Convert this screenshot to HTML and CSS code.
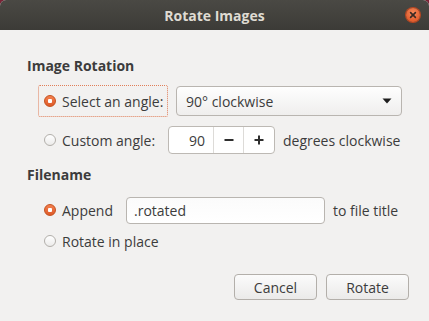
FILE: index.html
```html
<!DOCTYPE html>
<html lang="en">
<head>
  <meta charset="UTF-8" />
  <title>Rotate Images</title>
  <link rel="stylesheet" href="styles.css">
</head>
<body>
  <div class="window">

    <!-- title bar -->
    <header class="titlebar">
      <span class="title">Rotate Images</span>
      <span class="close">
        <svg width="14" height="14" viewBox="0 0 14 14"><path d="M4.6 4.6l4.8 4.8M9.4 4.6l-4.8 4.8" stroke="#3a2a24" stroke-width="1.6" stroke-linecap="round"/></svg>
      </span>
    </header>

    <main class="content">
      <section class="group">
        <h2>Image Rotation</h2>
        <div class="row">
          <label class="radio angle focus"><span class="dot on"></span>Select an angle:</label>
          <div class="combo">
            <span>90° clockwise</span>
            <svg class="arrow" width="10" height="6" viewBox="0 0 10 6"><path d="M0.5 0.5h9l-4.5 5z" fill="#1e1e1e"/></svg>
          </div>
        </div>
        <div class="row">
          <label class="radio angle"><span class="dot"></span>Custom angle:</label>
          <div class="spin">
            <span class="spin-val">90</span>
            <span class="spin-btn minus"><svg width="10" height="10" viewBox="0 0 10 10"><path d="M0.5 5h9" stroke="#2e2e2e" stroke-width="2"/></svg></span>
            <span class="spin-btn plus"><svg width="10" height="10" viewBox="0 0 10 10"><path d="M0.5 5h9M5 0.5v9" stroke="#2e2e2e" stroke-width="2"/></svg></span>
          </div>
          <span class="suffix">degrees clockwise</span>
        </div>
      </section>

      <section class="group">
        <h2>Filename</h2>
        <div class="row">
          <label class="radio append"><span class="dot on"></span>Append</label>
          <div class="entry">.rotated</div>
          <span class="suffix">to file title</span>
        </div>
        <div class="row short">
          <label class="radio"><span class="dot"></span>Rotate in place</label>
        </div>
      </section>
    </main>

    <footer class="actions">
      <button class="btn">Cancel</button>
      <button class="btn">Rotate</button>
    </footer>
  </div>
</body>
</html>
```

FILE: styles.css
```css
/* ===== base ===== */
*{box-sizing:border-box;}
html,body{margin:0;height:100%;}
body{
  background:#7a2336;
  font-family:'Open Sans','Noto Sans',sans-serif;font-size:14px;color:#3c3c3c;
}
.window{
  height:100%;background:#f2f1f0;border-radius:6px 6px 0 0;overflow:hidden;
  display:flex;flex-direction:column;
}

/* ===== title bar ===== */
.titlebar{
  height:30px;flex:none;position:relative;
  background:linear-gradient(#4a4944,#3c3b37);
  display:flex;align-items:center;justify-content:center;
}
.title{font-weight:bold;color:#dfdbd2;font-size:14px;}
.close{
  position:absolute;right:9px;top:8px;width:14px;height:14px;border-radius:50%;
  background:radial-gradient(circle at 50% 35%,#f58a5c,#e35d2d 70%);
  box-shadow:0 0 0 1px #b84620;
  display:flex;
}

/* ===== content ===== */
.content{padding:27px 27px 0;}
h2{font-size:14px;font-weight:bold;margin:0;line-height:18px;color:#3c3c3c;}
.group + .group{margin-top:10px;}
h2 + .row{margin-top:10px;}

.row{display:flex;align-items:center;height:32px;padding-left:11px;white-space:nowrap;}
.row + .row{margin-top:7px;}
.row.short{height:20px;margin-top:5px;}

.radio{display:flex;align-items:center;gap:6px;padding:0 6px;height:100%;}
.radio.angle{width:130px;}
.radio.append{width:80px;}
.focus{border:1px dotted #e07e58;border-radius:2px;padding:0 5px;}

.dot{
  width:12px;height:12px;border-radius:50%;flex:none;
  background:linear-gradient(#ffffff,#ecebea);border:1px solid #b2afaa;
}
.dot.on{
  border-color:#c4511f;
  background:radial-gradient(circle,#fff 0 2px,transparent 2.5px),linear-gradient(#f3804f,#de5a28);
}

/* ===== inputs ===== */
.combo{
  flex:1;margin-left:8px;height:30px;padding:0 9px 0 9px;
  border:1px solid #b9b5b0;border-radius:4px;
  background:linear-gradient(#fefefe,#efeeed);
  display:flex;align-items:center;justify-content:space-between;
}
.spin{
  display:flex;height:28px;border:1px solid #bdb9b4;border-radius:4px;
  background:#fff;overflow:hidden;
}
.spin-val{width:44px;display:flex;align-items:center;justify-content:flex-end;padding-right:8px;}
.spin-btn{
  width:30px;display:flex;align-items:center;justify-content:center;
  border-left:1px solid #dddbd8;
}
.spin-btn.plus{width:31px;}
.suffix{margin-left:8px;}

.entry{
  width:199px;margin-left:8px;height:27px;padding:0 7px;
  border:1px solid #b9b5b0;border-radius:4px;
  background:linear-gradient(#fbfbfb,#ffffff);
  display:flex;align-items:center;
}

/* ===== action buttons ===== */
.actions{margin-top:auto;padding:0 20px 21px;display:flex;justify-content:flex-end;gap:9px;}
.btn{
  width:83px;height:26px;font:inherit;color:#3c3c3c;
  border:1px solid #b3afaa;border-radius:4px;
  background:linear-gradient(#fbfbfb,#ebeae9);
}
```
